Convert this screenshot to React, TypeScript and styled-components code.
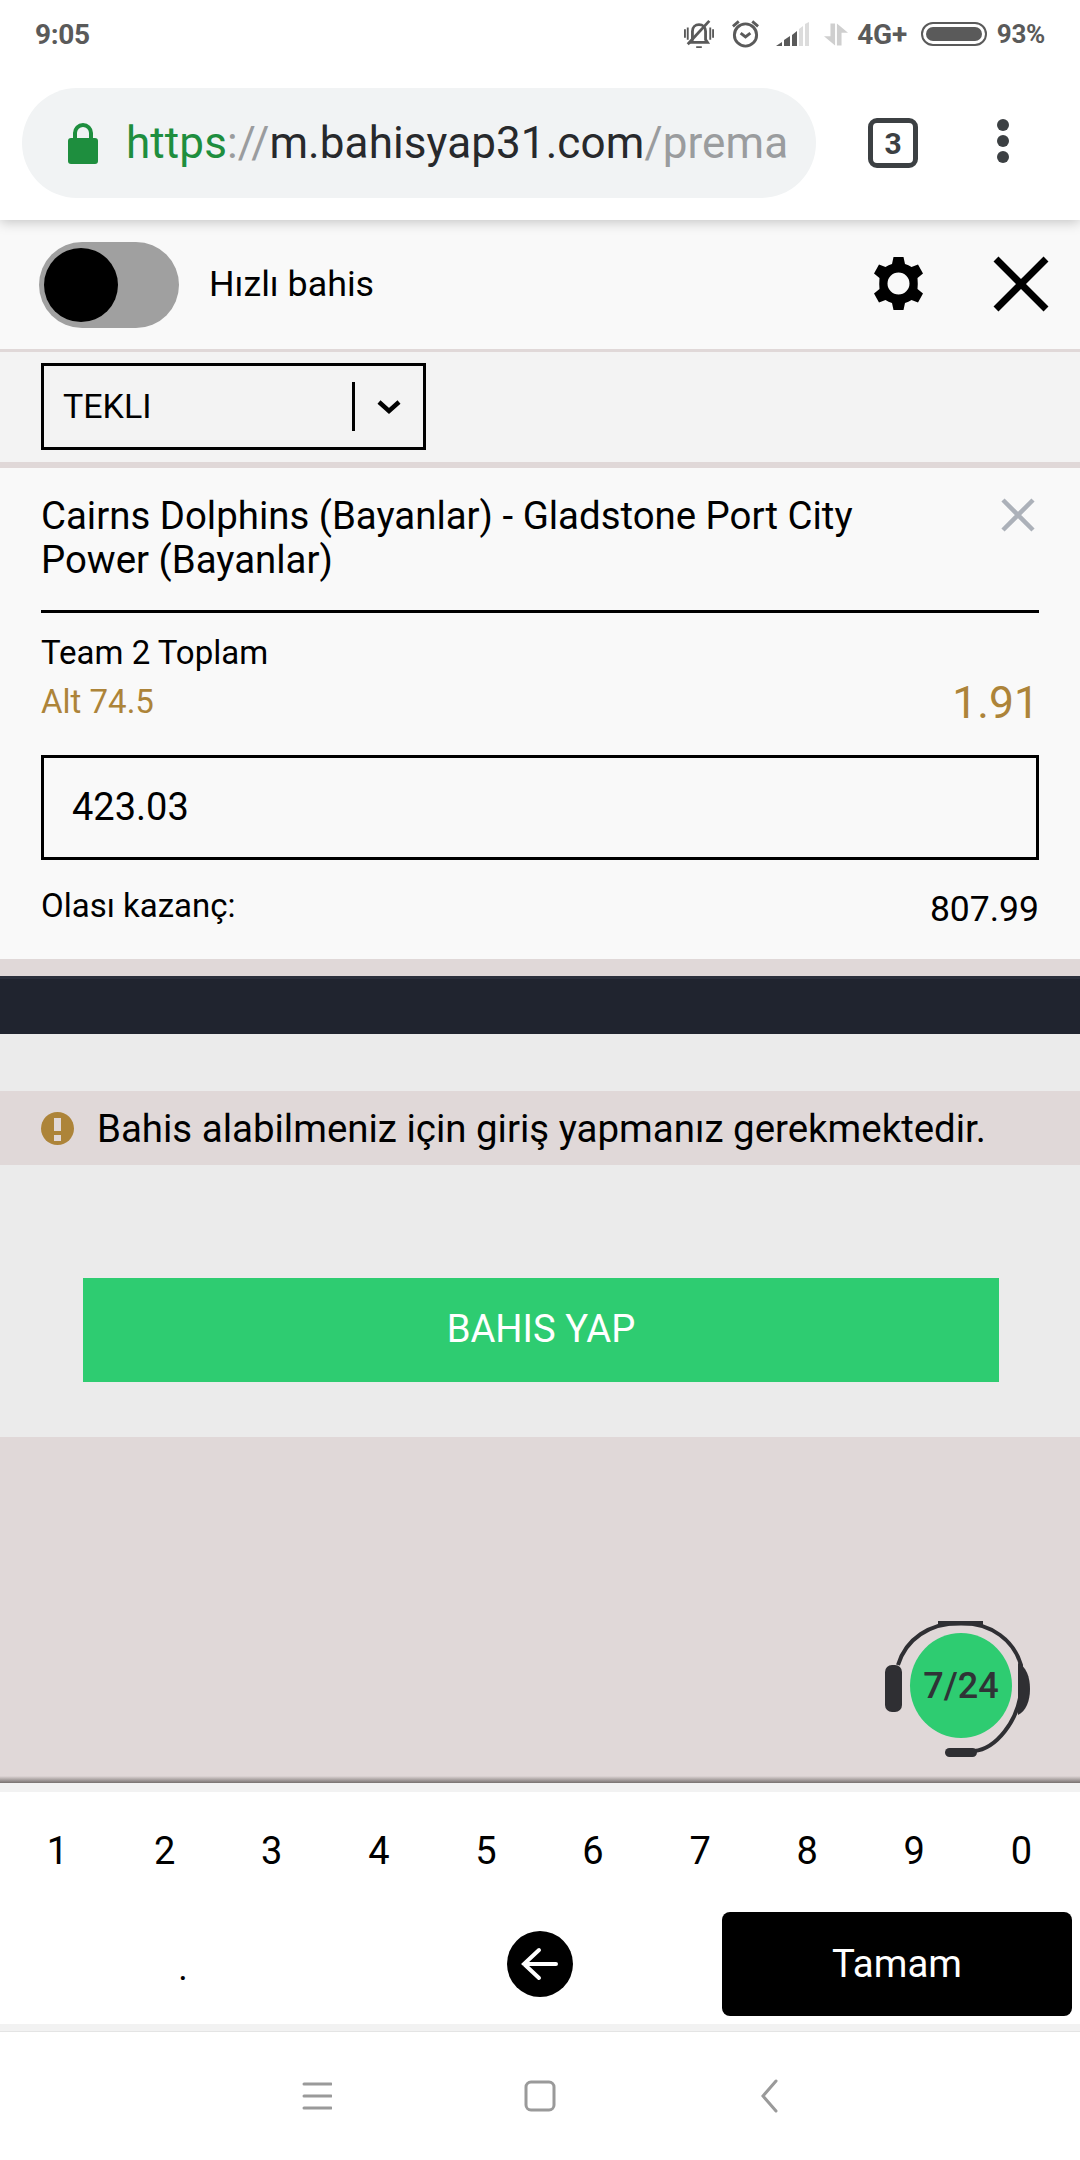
import styled, { createGlobalStyle } from "styled-components";

const GlobalStyle = createGlobalStyle`
    html, body {
        margin: 0;
        padding: 0;
        background: #fff;
        font-family: Roboto, "Liberation Sans", sans-serif;
        color: #000;
    }
    * { box-sizing: border-box; }
`;

const Page = styled.div`
    width: 1080px;
    height: 2160px;
    display: flex;
    flex-direction: column;
    overflow: hidden;
`;

const StatusBar = styled.div`
    height: 68px;
    padding: 0 35px;
    display: flex;
    align-items: center;
    justify-content: space-between;
    color: #5a5a5a;
    font-size: 28px;
    font-weight: 700;
    letter-spacing: -0.3px;
    background: #fff;
    position: relative;
    z-index: 2;
`;

const StatusRight = styled.div`
    display: flex;
    align-items: center;
`;

const StatusText = styled.span<{ $size: number; $gap: number }>`
    font-size: ${({ $size }) => $size}px;
    margin-right: ${({ $gap }) => $gap}px;
`;

const StatusIcon = styled.svg<{ $gap: number }>`
    display: block;
    margin-right: ${({ $gap }) => $gap}px;
`;

const BrowserBar = styled.div`
    height: 152px;
    padding: 20px 0 0 22px;
    display: flex;
    align-items: flex-start;
    position: relative;
    z-index: 1;
    box-shadow: 0 2px 12px rgba(0, 0, 0, 0.22);
    background: #fff;
`;

const UrlPill = styled.div`
    width: 794px;
    height: 110px;
    border-radius: 55px;
    background: #f1f3f4;
    display: flex;
    align-items: center;
    padding-left: 44px;
    font-size: 44px;
    letter-spacing: 0.1px;
    white-space: nowrap;
    overflow: hidden;
`;

const Lock = styled.svg`
    width: 34px;
    height: 42px;
    margin-right: 26px;
    flex-shrink: 0;
`;

const UrlPart = styled.span<{ $color: string }>`
    color: ${({ $color }) => $color};
`;

const TabCount = styled.div`
    width: 50px;
    height: 50px;
    margin: 30px 0 0 52px;
    border: 5px solid #3c4043;
    border-radius: 9px;
    color: #3c4043;
    font-size: 30px;
    font-weight: 700;
    display: flex;
    align-items: center;
    justify-content: center;
`;

const MenuDots = styled.div`
    margin: 31px 0 0 79px;
    display: flex;
    flex-direction: column;
    gap: 4px;

    span {
        width: 12px;
        height: 12px;
        border-radius: 50%;
        background: #3c4043;
    }
`;

const ToggleRow = styled.div`
    height: 132px;
    padding: 22px 31px 0 39px;
    background: #f9f9f9;
    border-bottom: 3px solid #e0d8d8;
    display: flex;
    align-items: flex-start;
`;

const Toggle = styled.div`
    width: 140px;
    height: 86px;
    border-radius: 43px;
    background: #a0a0a0;
    padding: 6px 5px;
    flex-shrink: 0;
`;

const Knob = styled.div`
    width: 74px;
    height: 74px;
    border-radius: 50%;
    background: #000;
`;

const ToggleLabel = styled.div`
    margin: 21px 0 0 30px;
    font-size: 35.8px;
    line-height: 42px;
    flex: 1;
`;

const Gear = styled.svg`
    width: 49px;
    height: 53px;
    margin: 15px 0 0 0;
`;

const BigClose = styled.svg`
    width: 56px;
    height: 56px;
    margin: 14px 0 0 70px;
`;

const SelectRow = styled.div`
    height: 116px;
    padding: 11px 0 0 41px;
    background: #f3f3f3;
    border-bottom: 6px solid #e0d8d8;
`;

const SelectBox = styled.div`
    width: 385px;
    height: 87px;
    border: 3px solid #000;
    display: flex;
    align-items: center;
    padding-left: 19px;
    font-size: 34px;
`;

const SelectValue = styled.span`
    flex: 1;
    padding-bottom: 2px;
`;

const SelectDivider = styled.span`
    width: 3px;
    height: 49px;
    background: #000;
`;

const SelectChevron = styled.svg`
    width: 24px;
    height: 16px;
    margin: 0 22px 0 22px;
`;

const Card = styled.div`
    height: 491px;
    padding: 26px 41px 0;
    background: #f9f9f9;
`;

const CardHead = styled.div`
    height: 119px;
    border-bottom: 3px solid #000;
    display: flex;
    justify-content: space-between;
`;

const Teams = styled.div`
    width: 880px;
    font-size: 38.4px;
    line-height: 44px;
`;

const SmallClose = styled.svg`
    width: 34px;
    height: 34px;
    margin: 4px 4px 0 0;
`;

const MarketName = styled.div`
    margin-top: 20px;
    font-size: 33px;
    line-height: 40px;
`;

const OddsRow = styled.div`
    display: flex;
    justify-content: space-between;
    align-items: flex-start;
    color: #ad8439;
`;

const Pick = styled.span`
    margin-top: 7px;
    font-size: 33px;
    line-height: 44px;
`;

const Odds = styled.span`
    margin: 5px 0 0 0;
    font-size: 44.5px;
    line-height: 50px;
`;

const StakeBox = styled.div`
    height: 105px;
    margin-top: 27px;
    border: 3px solid #000;
    display: flex;
    align-items: center;
    padding: 0 0 2px 28px;
    font-size: 38px;
`;

const WinRow = styled.div`
    margin-top: 26px;
    display: flex;
    justify-content: space-between;
    align-items: flex-start;
`;

const WinLabel = styled.span`
    font-size: 33px;
    line-height: 40px;
`;

const WinAmount = styled.span`
    margin-top: 2px;
    font-size: 35.5px;
    line-height: 42px;
`;

const Spacer = styled.div`
    height: 17px;
    background: #e0d8d8;
`;

const DarkBand = styled.div`
    height: 58px;
    background: #20242f;
    border-top: 3px solid #2b2f3b;
`;

const Gray = styled.div<{ $height: number }>`
    height: ${({ $height }) => $height}px;
    background: #ebebeb;
`;

const Warning = styled.div`
    height: 74px;
    background: #e0d8d8;
    display: flex;
    align-items: center;
    padding-left: 41px;
    font-size: 38.45px;
    white-space: nowrap;
`;

const WarnIcon = styled.svg`
    width: 33px;
    height: 33px;
    margin-right: 23px;
`;

const SubmitArea = styled.div`
    height: 272px;
    background: #ebebeb;
    padding: 113px 81px 0 83px;
`;

const SubmitButton = styled.div`
    height: 104px;
    background: #2ecc71;
    color: #fff;
    font-size: 38.2px;
    display: flex;
    align-items: center;
    justify-content: center;
    padding-bottom: 2px;
`;

const PinkArea = styled.div`
    height: 346px;
    background: linear-gradient(to bottom, #e0d8d8 calc(100% - 7px), #77716f 100%);
    display: flex;
    justify-content: flex-end;
    align-items: flex-start;
    padding: 184px 46px 0 0;
`;

const Support = styled.div`
    width: 150px;
    height: 138px;
    position: relative;
`;

const SupportDisc = styled.div`
    position: absolute;
    left: 26px;
    top: 12px;
    width: 102px;
    height: 105px;
    border-radius: 50%;
    background: #2ecc71;
    color: #2f3336;
    font-size: 36px;
    font-weight: 500;
    display: flex;
    align-items: center;
    justify-content: center;
`;

const KeyboardTop = styled.div`
    height: 9px;
    background: #f2f2f2;
`;

const Keyboard = styled.div`
    height: 232px;
    background: #fff;
    padding: 0 4px;
`;

const DigitRow = styled.div`
    height: 119px;
    display: grid;
    grid-template-columns: repeat(10, 107.1px);
    align-items: center;
    font-size: 38px;
    padding-bottom: 1px;
`;

const Digit = styled.span`
    text-align: center;
`;

const ActionRow = styled.div`
    height: 106px;
    display: flex;
    align-items: center;
    padding-left: 4px;
`;

const DotKey = styled.span`
    width: 350px;
    padding: 7px 0 0 0;
    font-size: 36px;
    text-align: center;
`;

const Backspace = styled.div`
    width: 66px;
    height: 66px;
    border-radius: 50%;
    background: #000;
    margin-left: 149px;
    display: flex;
    align-items: center;
    justify-content: center;
`;

const DoneKey = styled.div`
    width: 350px;
    height: 104px;
    margin-left: 149px;
    background: #000;
    color: #fff;
    border-radius: 8px;
    font-size: 38.4px;
    display: flex;
    align-items: center;
    justify-content: center;
    padding-bottom: 2px;
`;

const NavBar = styled.div`
    flex: 1;
    background: #fff;
    border-top: 7px solid #f2f2f2;
    box-shadow: inset 0 1px 0 #e4e4e4;
    display: flex;
    align-items: center;
    justify-content: center;
    gap: 192px;

    svg:last-child {
        margin-left: 12px;
    }
`;

const Drawing = styled.svg`
    display: block;
`;

const App = () => {
    return (
        <>
            <GlobalStyle />
            <Page>
                <StatusBar>
                    <span>9:05</span>
                    <StatusRight>
                        <StatusIcon $gap={17} width="30" height="30" viewBox="0 0 32 32" fill="none" stroke="#5a5a5a">
                            <path d="M9 22V13c0-4 3-7 7-7s7 3 7 7v9l2 3H7z" strokeWidth="3" />
                            <path d="M4 27 27 2" strokeWidth="3" />
                            <path d="M1 11v9M4 9v13M28 9v13M31 11v9M13 30h6" strokeWidth="2" />
                        </StatusIcon>
                        <StatusIcon $gap={16} width="29" height="30" viewBox="0 0 30 30" fill="none" stroke="#5a5a5a" strokeWidth="3">
                            <circle cx="15" cy="16" r="11.5" />
                            <path d="M10 14l5 4 5-4M2 7l6-5M28 7l-6-5" />
                        </StatusIcon>
                        <StatusIcon $gap={14} width="34" height="24" viewBox="0 0 34 24">
                            <path d="M0 24h6v-4zM8 24h6V14l-6 4zM16 24h5V9l-5 4z" fill="#5a5a5a" />
                            <path d="M23 24h4V4l-4 3zM29 24h4V0l-4 2z" fill="#dcdcdc" />
                        </StatusIcon>
                        <StatusIcon $gap={9} width="24" height="23" viewBox="0 0 26 24" fill="#cfcfcf">
                            <path d="M7 0h5v24L0 14h7zM14 0l12 10h-7v14h-5z" />
                        </StatusIcon>
                        <StatusText $size={28} $gap={14}>4G+</StatusText>
                        <StatusIcon $gap={10} width="66" height="24" viewBox="0 0 66 24">
                            <rect x="1" y="1" width="64" height="22" rx="11" fill="none" stroke="#5a5a5a" strokeWidth="2" />
                            <rect x="5" y="5" width="56" height="14" rx="7" fill="#5a5a5a" />
                        </StatusIcon>
                        <StatusText $size={26} $gap={0}>93%</StatusText>
                    </StatusRight>
                </StatusBar>
                <BrowserBar>
                    <UrlPill>
                        <Lock viewBox="0 0 34 42">
                            <path d="M9 18V11a8 8 0 0 1 16 0v7" fill="none" stroke="#1e8e3e" strokeWidth="4" />
                            <rect x="2" y="16" width="30" height="26" rx="3" fill="#1e8e3e" />
                        </Lock>
                        <UrlPart $color="#1e8e3e">https</UrlPart>
                        <UrlPart $color="#9a9c9e">://</UrlPart>
                        <UrlPart $color="#27292c">m.bahisyap31.com</UrlPart>
                        <UrlPart $color="#9a9c9e">/prema</UrlPart>
                    </UrlPill>
                    <TabCount>3</TabCount>
                    <MenuDots>
                        <span />
                        <span />
                        <span />
                    </MenuDots>
                </BrowserBar>
                <ToggleRow>
                    <Toggle>
                        <Knob />
                    </Toggle>
                    <ToggleLabel>Hızlı bahis</ToggleLabel>
                    <Gear viewBox="0 0 49 53">
                        <path
                            fillRule="evenodd"
                            d="M19.5 0h10L31 7q3.5 1 6.5 3L44 7.500 49 16.500 43.500 21q.5 5.500 0 11L49 36.500 44 45.500 37.500 43q-3 2-6.500 3L29.500 53h-10L18 46q-3.500-1-6.500-3L5 45.500 0 36.500 5.500 32q-.5-5.500 0-11L0 16.500 5 7.500 11.500 10q3-2 6.500-3zM24.500 15.500a11 11 0 1 0 0 22 11 11 0 0 0 0-22z"
                        />
                    </Gear>
                    <BigClose viewBox="0 0 56 56" stroke="#000" strokeWidth="7">
                        <path d="M3 3l50 50M53 3L3 53" />
                    </BigClose>
                </ToggleRow>
                <SelectRow>
                    <SelectBox>
                        <SelectValue>TEKLI</SelectValue>
                        <SelectDivider />
                        <SelectChevron viewBox="0 0 24 16" fill="none" stroke="#000" strokeWidth="4.5">
                            <path d="M2 3l10 9 10-9" />
                        </SelectChevron>
                    </SelectBox>
                </SelectRow>
                <Card>
                    <CardHead>
                        <Teams>Cairns Dolphins (Bayanlar) - Gladstone Port City Power (Bayanlar)</Teams>
                        <SmallClose viewBox="0 0 34 34" stroke="#acb1b9" strokeWidth="4.5">
                            <path d="M2 2l30 30M32 2L2 32" />
                        </SmallClose>
                    </CardHead>
                    <MarketName>Team 2 Toplam</MarketName>
                    <OddsRow>
                        <Pick>Alt 74.5</Pick>
                        <Odds>1.91</Odds>
                    </OddsRow>
                    <StakeBox>423.03</StakeBox>
                    <WinRow>
                        <WinLabel>Olası kazanç:</WinLabel>
                        <WinAmount>807.99</WinAmount>
                    </WinRow>
                </Card>
                <Spacer />
                <DarkBand />
                <Gray $height={57} />
                <Warning>
                    <WarnIcon viewBox="0 0 33 33">
                        <circle cx="16.5" cy="16.5" r="16.5" fill="#ad8439" />
                        <path d="M13 6h7v13h-7zM13 23h7v6h-7z" fill="#e0d8d8" />
                    </WarnIcon>
                    Bahis alabilmeniz için giriş yapmanız gerekmektedir.
                </Warning>
                <SubmitArea>
                    <SubmitButton>BAHIS YAP</SubmitButton>
                </SubmitArea>
                <PinkArea>
                    <Support>
                        <Drawing width="150" height="138" viewBox="0 0 150 138" fill="none" stroke="#2f2f33">
                            <path d="M14 44C22 18 45 2 77 2c31 0 53 18 60 42v26c-3 30-25 58-47 60" strokeWidth="4" />
                            <path d="M54 2h45" strokeWidth="5" />
                            <rect x="1" y="44" width="17" height="47" rx="7" fill="#2f2f33" stroke="none" />
                            <path d="M134 42c8 3 12 14 12 26s-4 22-12 26z" fill="#2f2f33" stroke="none" />
                            <rect x="61" y="127" width="32" height="9" rx="4.500" fill="#2f2f33" stroke="none" />
                        </Drawing>
                        <SupportDisc>7/24</SupportDisc>
                    </Support>
                </PinkArea>
                <KeyboardTop />
                <Keyboard>
                    <DigitRow>
                        {["1", "2", "3", "4", "5", "6", "7", "8", "9", "0"].map((digit) => (
                            <Digit key={digit}>{digit}</Digit>
                        ))}
                    </DigitRow>
                    <ActionRow>
                        <DotKey>.</DotKey>
                        <Backspace>
                            <Drawing width="38" height="34" viewBox="0 0 38 34" fill="none" stroke="#fff" strokeWidth="4" strokeLinecap="round">
                                <path d="M3 17h32M18 3L3 17l15 14" />
                            </Drawing>
                        </Backspace>
                        <DoneKey>Tamam</DoneKey>
                    </ActionRow>
                </Keyboard>
                <NavBar>
                    <Drawing width="30" height="28" viewBox="0 0 30 28" stroke="#9a9a9a" strokeWidth="3" strokeLinecap="round">
                        <path d="M2 2h27M2 14h27M2 26h27" />
                    </Drawing>
                    <Drawing width="32" height="32" viewBox="0 0 32 32" fill="none" stroke="#9a9a9a" strokeWidth="3">
                        <rect x="2" y="2" width="28" height="28" rx="5" />
                    </Drawing>
                    <Drawing width="19" height="34" viewBox="0 0 19 34" fill="none" stroke="#9a9a9a" strokeWidth="3" strokeLinecap="round">
                        <path d="M16 2L3 17l13 15" />
                    </Drawing>
                </NavBar>
            </Page>
        </>
    );
};

export default App;
